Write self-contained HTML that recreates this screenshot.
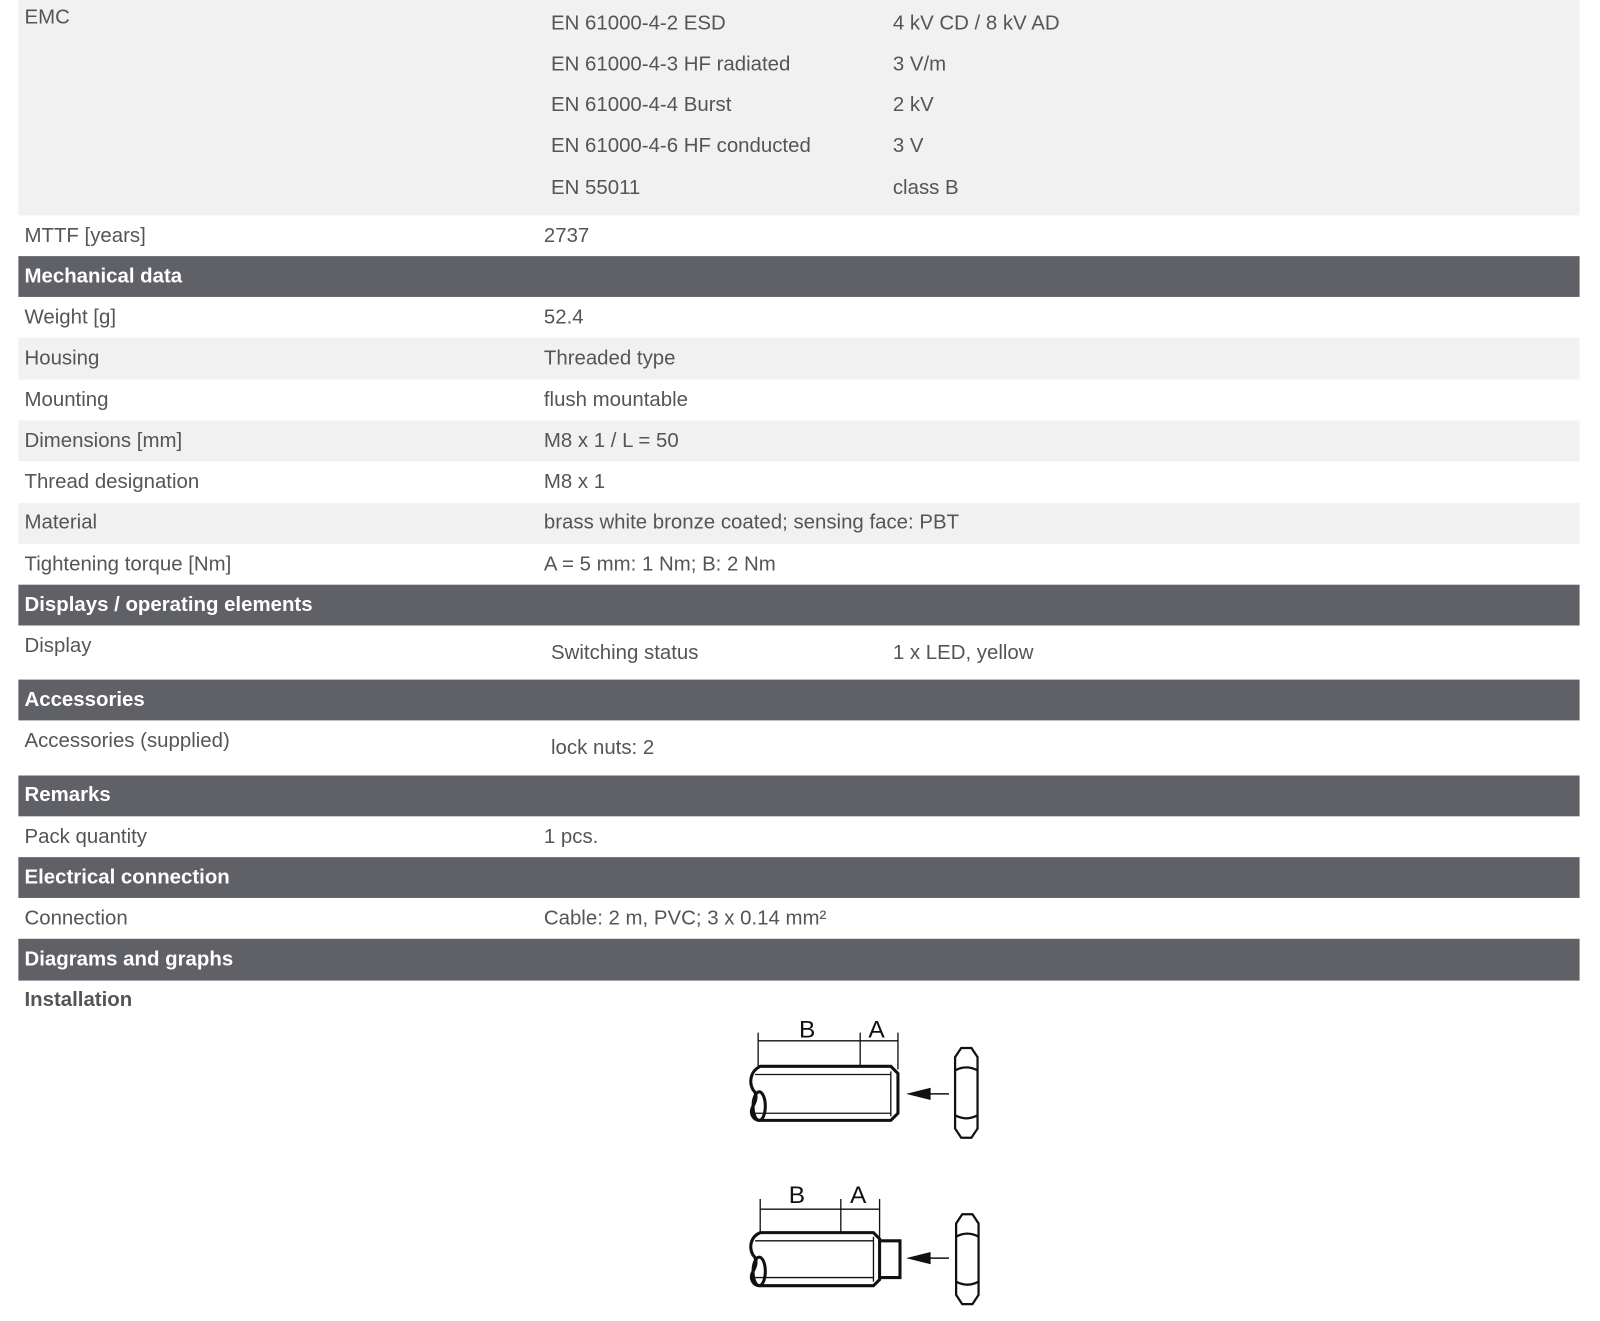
<!DOCTYPE html>
<html><head><meta charset="utf-8"><style>
html,body{margin:0;padding:0;background:#fff;width:1600px;height:1321px;overflow:hidden}
#w{position:absolute;left:0;top:0;width:1568px;height:1295px;transform:scale(1.0204);transform-origin:0 0;font-family:"Liberation Sans",Arial,sans-serif;font-size:20px;color:#555}
.r{position:absolute;left:18px;width:1530px}
.g{background:#f1f1f1}
.h{background:#606167;color:#fff;font-weight:bold}
.t{position:absolute;white-space:nowrap;line-height:22px}
</style></head><body><div id="w">
<div class="r g" style="top:0;height:211px"></div>
<div class="t" style="left:24px;top:6px">EMC</div>
<div class="t" style="left:540px;top:12px">EN 61000-4-2 ESD</div><div class="t" style="left:875px;top:12px">4 kV CD / 8 kV AD</div>
<div class="t" style="left:540px;top:52px">EN 61000-4-3 HF radiated</div><div class="t" style="left:875px;top:52px">3 V/m</div>
<div class="t" style="left:540px;top:92px">EN 61000-4-4 Burst</div><div class="t" style="left:875px;top:92px">2 kV</div>
<div class="t" style="left:540px;top:132px">EN 61000-4-6 HF conducted</div><div class="t" style="left:875px;top:132px">3 V</div>
<div class="t" style="left:540px;top:173px">EN 55011</div><div class="t" style="left:875px;top:173px">class B</div>

<div class="t" style="left:24px;top:220px">MTTF [years]</div><div class="t" style="left:533px;top:220px">2737</div>

<div class="r h" style="top:251px;height:40px"></div><div class="t" style="left:24px;top:260px;color:#fff;font-weight:bold">Mechanical data</div>
<div class="t" style="left:24px;top:300px">Weight [g]</div><div class="t" style="left:533px;top:300px">52.4</div>
<div class="r g" style="top:331px;height:41px"></div>
<div class="t" style="left:24px;top:340px">Housing</div><div class="t" style="left:533px;top:340px">Threaded type</div>
<div class="t" style="left:24px;top:381px">Mounting</div><div class="t" style="left:533px;top:381px">flush mountable</div>
<div class="r g" style="top:412px;height:40px"></div>
<div class="t" style="left:24px;top:421px">Dimensions [mm]</div><div class="t" style="left:533px;top:421px">M8 x 1 / L = 50</div>
<div class="t" style="left:24px;top:461px">Thread designation</div><div class="t" style="left:533px;top:461px">M8 x 1</div>
<div class="r g" style="top:493px;height:40px"></div>
<div class="t" style="left:24px;top:501px">Material</div><div class="t" style="left:533px;top:501px">brass white bronze coated; sensing face: PBT</div>
<div class="t" style="left:24px;top:542px">Tightening torque [Nm]</div><div class="t" style="left:533px;top:542px">A = 5 mm: 1 Nm; B: 2 Nm</div>

<div class="r h" style="top:573px;height:40px"></div><div class="t" style="left:24px;top:582px;color:#fff;font-weight:bold">Displays / operating elements</div>
<div class="t" style="left:24px;top:622px">Display</div><div class="t" style="left:540px;top:629px">Switching status</div><div class="t" style="left:875px;top:629px">1 x LED, yellow</div>

<div class="r h" style="top:666px;height:40px"></div><div class="t" style="left:24px;top:675px;color:#fff;font-weight:bold">Accessories</div>
<div class="t" style="left:24px;top:715px">Accessories (supplied)</div><div class="t" style="left:540px;top:722px">lock nuts: 2</div>

<div class="r h" style="top:760px;height:40px"></div><div class="t" style="left:24px;top:768px;color:#fff;font-weight:bold">Remarks</div>
<div class="t" style="left:24px;top:809px">Pack quantity</div><div class="t" style="left:533px;top:809px">1 pcs.</div>
<div class="r h" style="top:840px;height:40px"></div><div class="t" style="left:24px;top:849px;color:#fff;font-weight:bold">Electrical connection</div>
<div class="t" style="left:24px;top:889px">Connection</div><div class="t" style="left:533px;top:889px">Cable: 2 m, PVC; 3 x 0.14 mm²</div>
<div class="r h" style="top:920px;height:41px"></div><div class="t" style="left:24px;top:929px;color:#fff;font-weight:bold">Diagrams and graphs</div>
<div class="t" style="left:24px;top:969px;font-weight:bold">Installation</div>

<svg style="position:absolute;left:0;top:0" width="1568" height="1295" fill="none" stroke="#111">
<g font-family="Liberation Sans,Arial,sans-serif" font-size="24" fill="#111" stroke="none">
<text x="783" y="1017">B</text><text x="851" y="1017">A</text>
<text x="773" y="1179">B</text><text x="833" y="1179">A</text></g>
<g stroke-width="1.3"><path d="M743 1012V1045M843 1012V1045M880 1012V1048M743 1020H880"/>
<path d="M740 1053H873M740 1091H873M873 1050V1094"/></g>
<path stroke-width="3" d="M745 1045H873L880 1052V1091L873 1098H745C738 1098 734 1091 738 1084C742 1077 742 1072 738 1068C734 1061 735 1050 745 1045Z"/>
<ellipse cx="744" cy="1084" rx="6" ry="14" stroke-width="3"/>
<path stroke-width="1.5" d="M930 1072H900"/><path fill="#111" stroke="none" d="M888 1072L912 1066V1078Z"/>
<path stroke-width="2.2" d="M942 1027H952L958 1036V1106L952 1115H942L936 1106V1036ZM936 1049Q947 1043 958 1049M936 1093Q947 1099 958 1093"/>
<g stroke-width="1.3"><path d="M745 1175V1208M824 1175V1208M862 1175V1212M745 1185H862"/>
<path d="M740 1216H856M740 1252H856M856 1212V1256"/></g>
<path stroke-width="3" d="M745 1208H856L862 1214V1254L856 1260H745C738 1260 734 1253 738 1246C742 1239 742 1234 738 1230C734 1223 735 1212 745 1208Z"/>
<path stroke-width="3" d="M862 1216H882V1252H862"/>
<ellipse cx="744" cy="1246" rx="6" ry="14" stroke-width="3"/>
<path stroke-width="1.5" d="M930 1233H900"/><path fill="#111" stroke="none" d="M888 1233L912 1227V1239Z"/>
<path stroke-width="2.2" d="M943 1190H953L959 1199V1269L953 1278H943L937 1269V1199ZM937 1212Q948 1206 959 1212M937 1256Q948 1262 959 1256"/>
</svg>
</div></body></html>
